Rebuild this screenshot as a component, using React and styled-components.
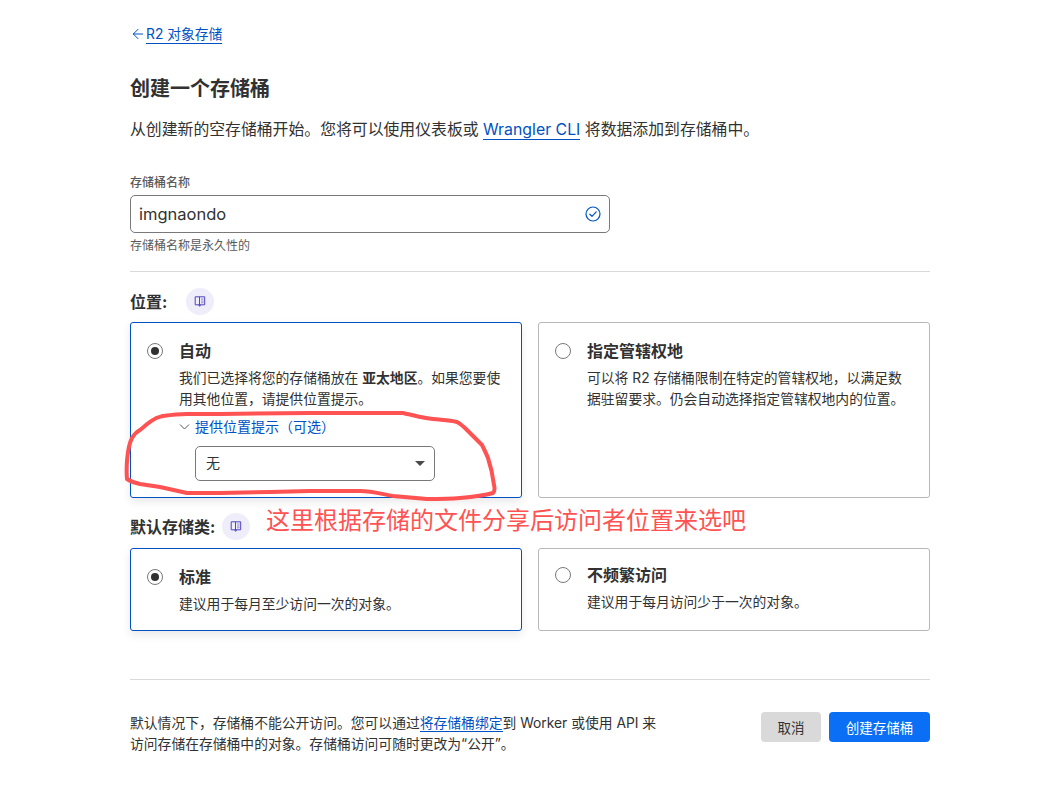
import styled, { createGlobalStyle } from "styled-components";
import { ArrowLeft } from "lucide-react";

const GlobalStyle = createGlobalStyle`
  html, body {
    margin: 0;
    background: #fff;
  }
  body {
    font-family: Inter, "Noto Sans CJK SC", "Noto Sans", sans-serif;
    color: #313131;
  }
  * {
    box-sizing: border-box;
  }
`;

const Page = styled.div`
  position: relative;
  width: 800px;
  height: 797px;
  margin-left: 130px;
  padding-top: 24px;
`;

const BackRow = styled.div`
  display: flex;
  align-items: center;
  height: 20px;
  color: #0051c3;
`;

const TextLink = styled.a`
  color: #0051c3;
  text-decoration: none;
  border-bottom: 1px solid #0051c3;
`;

const BackLink = styled(TextLink)`
  font-size: 13.8px;
  line-height: 18px;
  padding-top: 1px;
`;

const Title = styled.h1`
  margin: 32px 0 0;
  font-size: 20px;
  line-height: 26px;
  font-weight: 700;
  color: #313131;
`;

const Lead = styled.p`
  margin: 16px 0 0;
  font-size: 15.85px;
  line-height: 24px;
`;

const FieldLabel = styled.label`
  display: block;
  margin-top: 32px;
  font-size: 12px;
  line-height: 18px;
  font-weight: 500;
  color: #595959;
`;

const InputBox = styled.div`
  display: flex;
  align-items: center;
  justify-content: space-between;
  width: 480px;
  height: 38px;
  margin-top: 3px;
  padding: 0 8px;
  border: 1px solid #797979;
  border-radius: 5px;
  font-size: 16.5px;
  color: #313131;
`;

const Hint = styled.div`
  margin-top: 4px;
  font-size: 12px;
  line-height: 18px;
  color: #595959;
`;

const Divider = styled.hr`
  margin: ${({ $top }) => $top}px 0 0;
  border: 0;
  border-top: 1px solid #d9d9d9;
`;

const SectionHead = styled.div`
  display: flex;
  align-items: center;
  height: 28px;
  margin-top: ${({ $top }) => $top}px;
  gap: ${({ $gap }) => $gap}px;
  font-size: 16px;
  font-weight: 700;
  color: #313131;
`;

const DocBadge = styled.span`
  display: flex;
  align-items: center;
  justify-content: center;
  width: 28px;
  height: 27px;
  border-radius: 50%;
  background: #f0edfb;
`;

const CardGrid = styled.div`
  display: grid;
  grid-template-columns: 392px 392px;
  gap: 16px;
  margin-top: ${({ $top }) => $top}px;
`;

const Card = styled.div`
  display: flex;
  gap: 16px;
  height: ${({ $height }) => $height}px;
  padding: ${({ $padTop }) => $padTop}px 16px 0;
  border: 1px solid ${({ $selected }) => ($selected ? "#0051c3" : "#b8b8b8")};
  border-radius: 3px;
  box-shadow: ${({ $selected }) =>
    $selected ? "0 4px 10px rgba(0, 0, 0, 0.09)" : "none"};
`;

const Radio = styled.span`
  flex: none;
  display: flex;
  align-items: center;
  justify-content: center;
  width: 16px;
  height: 16px;
  margin-top: 5px;
  border: 1px solid #797979;
  border-radius: 50%;
  background: #fff;

  &::after {
    content: "";
    display: ${({ $on }) => ($on ? "block" : "none")};
    width: 8px;
    height: 8px;
    border-radius: 50%;
    background: #313131;
  }
`;

const CardBody = styled.div`
  min-width: 0;
  flex: 1;
`;

const CardTitle = styled.div`
  font-size: 16px;
  line-height: 26px;
  font-weight: 700;
  color: #313131;
`;

const CardText = styled.p`
  margin: 4px 0 0;
  font-size: 13.8px;
  line-height: 21px;
  color: #313131;

  strong {
    font-weight: 700;
  }
`;

const Disclosure = styled.div`
  display: flex;
  align-items: center;
  gap: 5px;
  margin-top: 6px;
  height: 20px;
  font-size: 14px;
  color: #0051c3;
`;

const SelectBox = styled.div`
  display: flex;
  align-items: center;
  justify-content: space-between;
  width: 240px;
  height: 35px;
  margin: 10px 0 0 16px;
  padding: 0 9px 0 10px;
  border: 1px solid #797979;
  border-radius: 5px;
  font-size: 14px;
`;

const SelectValue = styled.span`
  margin-top: -3px;
`;

const Caret = styled.span`
  width: 0;
  height: 0;
  border-left: 5px solid transparent;
  border-right: 5px solid transparent;
  border-top: 5px solid #4a4a4a;
`;

const Footer = styled.div`
  display: flex;
  justify-content: space-between;
  align-items: flex-start;
  margin-top: 22px;
`;

const FooterText = styled.p`
  margin: 11px 0 0;
  width: 540px;
  font-size: 13.8px;
  line-height: 21px;
  color: #313131;
`;

const Actions = styled.div`
  display: flex;
  gap: 8px;
  margin-top: 10px;
`;

const Button = styled.button`
  height: 30px;
  width: ${({ $width }) => $width}px;
  border: 0;
  border-radius: 4px;
  padding: 0;
  font: inherit;
  font-size: 13.5px;
  color: ${({ $primary }) => ($primary ? "#fff" : "#313131")};
  background: ${({ $primary }) => ($primary ? "#0a6ff5" : "#d9d9d9")};
`;

const Scribble = styled.svg`
  position: absolute;
  left: -10px;
  top: 405px;
  pointer-events: none;
`;

const Annotation = styled.div`
  position: absolute;
  left: 136px;
  top: 503px;
  font-size: 24px;
  line-height: 36px;
  color: #ff5252;
  white-space: nowrap;
`;

const DocIcon = () => (
  <svg width="12" height="12" viewBox="0 0 12 12" fill="none">
    <path
      d="M1.2 1.8h4.3v8h-4.3zM5.5 1.8h5.2v8H5.5zM5 9.8v1.2h1.2V9.8"
      stroke="#4f46b8"
      strokeWidth="1"
    />
    <path d="M7 4h2.6M7 6h2.6M7 7.8h2.6" stroke="#8f88d8" strokeWidth="1" />
  </svg>
);

const CheckCircle = () => (
  <svg width="16" height="16" viewBox="0 0 16 16" fill="none">
    <circle cx="8" cy="8" r="7" stroke="#0051c3" strokeWidth="1.2" />
    <path
      d="M4.8 8.2l2.2 2.1 4.2-4.4"
      stroke="#0051c3"
      strokeWidth="1.2"
      strokeLinecap="round"
      strokeLinejoin="round"
    />
  </svg>
);

const DisclosureChevron = () => (
  <svg width="11" height="11" viewBox="0 0 11 11" fill="none">
    <path d="M1 3.5l4.5 4.5L10 3.5" stroke="#595959" strokeWidth="1" />
  </svg>
);

const App = () => {
  return (
    <>
      <GlobalStyle />
      <Page>
        <BackRow>
          <ArrowLeft size={16} strokeWidth={1.5} />
          <BackLink href="#">R2 对象存储</BackLink>
        </BackRow>

        <Title>创建一个存储桶</Title>
        <Lead>
          从创建新的空存储桶开始。您将可以使用仪表板或{" "}
          <TextLink href="#">Wrangler CLI</TextLink> 将数据添加到存储桶中。
        </Lead>

        <FieldLabel>存储桶名称</FieldLabel>
        <InputBox>
          imgnaondo
          <CheckCircle />
        </InputBox>
        <Hint>存储桶名称是永久性的</Hint>

        <Divider $top={16} />

        <SectionHead $top={15} $gap={19}>
          位置:
          <DocBadge>
            <DocIcon />
          </DocBadge>
        </SectionHead>
        <CardGrid $top={7}>
          <Card $selected $height={176} $padTop={15}>
            <Radio $on />
            <CardBody>
              <CardTitle>自动</CardTitle>
              <CardText>
                我们已选择将您的存储桶放在 <strong>亚太地区</strong>
                。如果您要使用其他位置，请提供位置提示。
              </CardText>
              <Disclosure>
                <DisclosureChevron />
                提供位置提示（可选）
              </Disclosure>
              <SelectBox>
                <SelectValue>无</SelectValue>
                <Caret />
              </SelectBox>
            </CardBody>
          </Card>
          <Card $height={176} $padTop={15}>
            <Radio />
            <CardBody>
              <CardTitle>指定管辖权地</CardTitle>
              <CardText>
                可以将 R2
                存储桶限制在特定的管辖权地，以满足数据驻留要求。仍会自动选择指定管辖权地内的位置。
              </CardText>
            </CardBody>
          </Card>
        </CardGrid>

        <SectionHead $top={14} $gap={7}>
          默认存储类:
          <DocBadge>
            <DocIcon />
          </DocBadge>
        </SectionHead>
        <CardGrid $top={8}>
          <Card $selected $height={83} $padTop={15}>
            <Radio $on />
            <CardBody>
              <CardTitle>标准</CardTitle>
              <CardText>建议用于每月至少访问一次的对象。</CardText>
            </CardBody>
          </Card>
          <Card $height={83} $padTop={13}>
            <Radio />
            <CardBody>
              <CardTitle>不频繁访问</CardTitle>
              <CardText>建议用于每月访问少于一次的对象。</CardText>
            </CardBody>
          </Card>
        </CardGrid>

        <Divider $top={48} />

        <Footer>
          <FooterText>
            默认情况下，存储桶不能公开访问。您可以通过
            <TextLink href="#">将存储桶绑定</TextLink>到 Worker 或使用 API 来
            访问存储在存储桶中的对象。存储桶访问可随时更改为“公开”。
          </FooterText>
          <Actions>
            <Button $width={60}>取消</Button>
            <Button $primary $width={101}>
              创建存储桶
            </Button>
          </Actions>
        </Footer>

        <Scribble width="400" height="105" viewBox="120 405 400 105" fill="none">
          <path
            d="M127 479C126 468 127 448 132 438C135 433 138 431 140 430C145 426 149 422 153 420C157 417 160 417 163 416C170 415 178 414 187 414L220 414L310 413L403 413C413 415 423 418 433 419C442 420 450 420 457 422C461 424 464 427 467 430C472 435 477 440 482 445C484 449 486 453 488 458C491 467 493 477 494 485C495 489 495 491 493 493C482 496 471 497 460 498C449 499 438 499 427 499C415 498 404 497 393 496C382 494 371 491 360 491L310 491L270 492L220 493L187 493C178 491 169 489 160 487C153 486 146 485 140 484C135 483 130 481 127 479Z"
            stroke="#ff5252"
            strokeWidth="4"
            strokeLinejoin="round"
          />
        </Scribble>
        <Annotation>这里根据存储的文件分享后访问者位置来选吧</Annotation>
      </Page>
    </>
  );
};

export default App;
